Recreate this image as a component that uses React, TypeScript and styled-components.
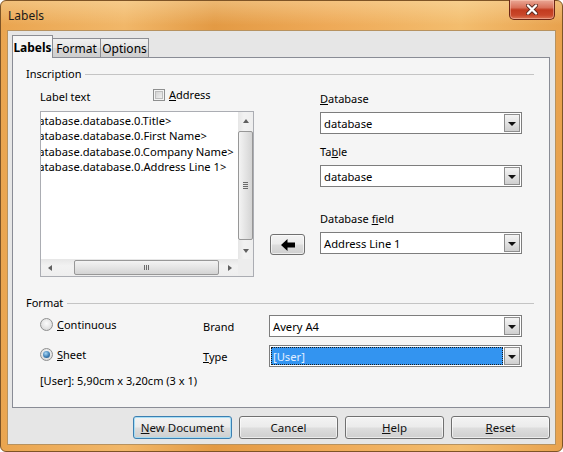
import React from 'react';
import styled, { createGlobalStyle, css } from 'styled-components';

const GlobalStyle = createGlobalStyle`
  html, body {
    margin: 0;
    padding: 0;
  }
  body {
    width: 563px;
    height: 452px;
    overflow: hidden;
    font-family: "Noto Sans", "Open Sans", sans-serif;
    font-size: 11px;
    color: #000;
  }
  * { box-sizing: border-box; }
`;

const Window = styled.div`
  width: 563px;
  height: 452px;
  display: flex;
  flex-direction: column;
  padding: 0 6px 6px 6px;
  border: 1px solid #7e5426;
  border-radius: 6px;
  background:
    linear-gradient(180deg, rgba(255, 240, 200, 0.35) 0px, rgba(255, 255, 255, 0) 24px),
    linear-gradient(90deg, #eaa550 0%, #f1b769 22%, #e39a44 38%, #eea957 58%, #f3bd6e 82%, #e8a24e 100%);
`;

const TitleBar = styled.div`
  height: 29px;
  display: flex;
  align-items: flex-start;
  justify-content: space-between;
  padding-left: 1px;
`;

const Title = styled.div`
  margin-top: 6px;
  font-size: 12px;
  color: #1a1a1a;
`;

const CloseButton = styled.div`
  width: 46px;
  height: 20px;
  margin-right: 1px;
  margin-top: -1px;
  display: flex;
  align-items: center;
  justify-content: center;
  border: 1px solid #6b2616;
  border-top: none;
  border-radius: 0 0 5px 5px;
  background: linear-gradient(180deg, #eaa896 0%, #d9715a 40%, #c23b1f 52%, #c9472a 80%, #dc7656 100%);
  box-shadow: inset 0 0 0 1px rgba(255, 210, 190, 0.45);
`;

const Client = styled.div`
  flex: 1;
  display: flex;
  flex-direction: column;
  background: #e6e6e6;
  border: 1px solid #b7925f;
  padding: 5px 5px 5px 4px;
`;

const TabRow = styled.div`
  height: 21px;
  display: flex;
  align-items: flex-end;
  position: relative;
  z-index: 1;
`;

const Tab = styled.div<{ $active?: boolean; $w: number }>`
  width: ${(p) => p.$w}px;
  display: flex;
  align-items: center;
  justify-content: center;
  border: 1px solid #8c8e94;
  border-bottom: none;
  font-size: 12px;
  ${(p) =>
    p.$active
      ? css`
          height: 23px;
          margin-bottom: -1px;
          background: #f6f6f6;
          font-weight: bold;
          padding-top: 1px;
        `
      : css`
          height: 19px;
          margin-left: -1px;
          background: linear-gradient(180deg, #f0f0f0 0%, #e3e3e3 50%, #d7d7d7 51%, #cfcfcf 100%);
        `}
`;

const Panel = styled.div`
  height: 351px;
  background: #f5f5f5;
  border: 1px solid #898c95;
  padding: 8px 15px 0 13px;
  display: flex;
  flex-direction: column;
`;

const GroupHeading = styled.div<{ $top?: number }>`
  height: 15px;
  margin-top: ${(p) => p.$top ?? 0}px;
  display: flex;
  align-items: center;
  gap: 4px;
  line-height: 15px;

  &::after {
    content: '';
    flex: 1;
    height: 1px;
    background: #c4c4c4;
    margin-top: 1px;
  }
`;

const Inscription = styled.div`
  display: flex;
  padding-left: 14px;
  margin-top: 5px;
`;

const LeftCol = styled.div`
  width: 214px;
  display: flex;
  flex-direction: column;
`;

const LabelRow = styled.div`
  height: 25px;
  display: flex;
  align-items: flex-start;
`;

const LabelText = styled.div`
  width: 113px;
  padding-top: 3px;
  line-height: 15px;
`;

const CheckWrap = styled.label`
  display: flex;
  align-items: center;
  gap: 4px;
  line-height: 15px;
  padding-top: 1px;
`;

const CheckBox = styled.span`
  width: 12px;
  height: 12px;
  border: 1px solid #8e8f8f;
  background: linear-gradient(135deg, #c9c9c9 0%, #e6e6e6 60%, #f6f6f6 100%);
  box-shadow: inset 0 0 0 1px #f4f4f4, inset 0 0 0 2px #bdbdbd;
`;

const TextBox = styled.div`
  height: 166px;
  border: 1px solid #abadb3;
  background: #fff;
  display: grid;
  grid-template-columns: 1fr 15px;
  grid-template-rows: 1fr 17px;
`;

const TextArea = styled.div`
  overflow: hidden;
  line-height: 15.3px;
  font-size: 11.2px;
  padding-top: 1px;
  white-space: nowrap;
`;

const TextLines = styled.div<{ $scroll: number }>`
  margin-left: ${(p) => -p.$scroll}px;
`;

const VScroll = styled.div`
  background: linear-gradient(90deg, #e6e6e6, #f2f2f2 40%, #eeeeee);
  display: flex;
  flex-direction: column;
`;

const HScroll = styled.div`
  background: linear-gradient(180deg, #e6e6e6, #f2f2f2 40%, #eeeeee);
  display: flex;
  align-items: center;
`;

const Corner = styled.div`
  background: #ededed;
`;

const ArrowCell = styled.div<{ $dir: 'up' | 'down' | 'left' | 'right' }>`
  flex: 0 0 17px;
  height: 17px;
  display: flex;
  align-items: center;
  justify-content: center;

  &::before {
    content: '';
    width: 0;
    height: 0;
    ${(p) =>
      p.$dir === 'up'
        ? css`border-left: 3.5px solid transparent; border-right: 3.5px solid transparent; border-bottom: 4px solid #606060;`
        : p.$dir === 'down'
        ? css`border-left: 3.5px solid transparent; border-right: 3.5px solid transparent; border-top: 4px solid #606060;`
        : p.$dir === 'left'
        ? css`border-top: 3.5px solid transparent; border-bottom: 3.5px solid transparent; border-right: 4px solid #606060;`
        : css`border-top: 3.5px solid transparent; border-bottom: 3.5px solid transparent; border-left: 4px solid #606060;`}
  }
`;

const VThumb = styled.div`
  flex: 1;
  margin: 2px 0 2px 0;
  border: 1px solid #979797;
  border-radius: 2px;
  background: linear-gradient(90deg, #f3f3f3 0%, #e4e4e4 50%, #d4d4d4 100%);
  display: flex;
  flex-direction: column;
  align-items: center;
  justify-content: center;
  gap: 1px;

  span {
    width: 5px;
    height: 1px;
    background: #6a6a6a;
  }
`;

const HThumb = styled.div<{ $offset: number }>`
  width: 145px;
  height: 15px;
  margin-left: ${(p) => p.$offset}px;
  border: 1px solid #979797;
  border-radius: 2px;
  background: linear-gradient(180deg, #f3f3f3 0%, #e4e4e4 50%, #d4d4d4 100%);
  display: flex;
  align-items: center;
  justify-content: center;
  gap: 1px;

  span {
    width: 1px;
    height: 5px;
    background: #6a6a6a;
  }
`;

const HSpacer = styled.div`
  flex: 1;
`;

const ArrowCol = styled.div`
  width: 35px;
  margin-left: 16px;
  padding-top: 148px;
`;

const PushButton = styled.div<{ $w?: number; $default?: boolean }>`
  width: ${(p) => p.$w ?? 99}px;
  height: ${(p) => (p.$w ? 21 : 23)}px;
  display: flex;
  align-items: center;
  justify-content: center;
  border: 1px solid ${(p) => (p.$default ? '#3c7fb1' : '#707070')};
  border-radius: 3px;
  background: linear-gradient(180deg, #f3f3f3 0%, #ebebeb 48%, #dddddd 52%, #cfcfcf 100%);
  box-shadow: inset 0 0 0 1px ${(p) => (p.$default ? 'rgba(160, 220, 245, 0.9)' : 'rgba(255, 255, 255, 0.6)')};
  font-size: 11.5px;
  color: #111;
`;

const RightCol = styled.div`
  width: 202px;
  margin-left: 15px;
  display: flex;
  flex-direction: column;
  padding-top: 5px;
`;

const FieldLabel = styled.div<{ $top?: number }>`
  line-height: 15px;
  margin-top: ${(p) => p.$top ?? 0}px;
  margin-bottom: 6px;
`;

const Combo = styled.div`
  height: 22px;
  border: 1px solid #7d7d7d;
  background: #fff;
  display: flex;
  align-items: stretch;
  padding: 1px;
  font-size: 11.2px;
`;

const ComboValue = styled.div<{ $selected?: boolean }>`
  flex: 1;
  display: flex;
  align-items: center;
  padding-left: 2px;
  ${(p) =>
    p.$selected &&
    css`
      background: #3394f0;
      color: #e2efff;
      outline: 1px dotted #1a1a1a;
      outline-offset: -1px;
    `}
`;

const DropButton = styled.div`
  width: 16px;
  border: 1px solid #8d8d8d;
  margin-left: 1px;
  background: linear-gradient(180deg, #f4f4f4 0%, #e2e2e2 50%, #cfcfcf 100%);
  display: flex;
  align-items: center;
  justify-content: center;

  &::before {
    content: '';
    border-left: 4px solid transparent;
    border-right: 4px solid transparent;
    border-top: 4px solid #111;
    margin-top: 1px;
  }
`;

const FormatGrid = styled.div`
  margin-top: 5px;
  padding-left: 14px;
  display: grid;
  grid-template-columns: 163px 66px 253px;
  grid-auto-rows: 22px;
  row-gap: 8px;
  align-items: center;
`;

const RadioWrap = styled.label`
  display: flex;
  align-items: center;
  gap: 4px;
  margin-top: -4px;
  line-height: 15px;
`;

const Radio = styled.span<{ $checked?: boolean }>`
  width: 13px;
  height: 13px;
  border-radius: 50%;
  border: 1px solid #8e8f8f;
  background: radial-gradient(circle at 50% 40%, #fbfbfb 0%, #e4e4e4 55%, #cfcfcf 100%);
  display: flex;
  align-items: center;
  justify-content: center;

  &::after {
    content: '';
    display: ${(p) => (p.$checked ? 'block' : 'none')};
    width: 7px;
    height: 7px;
    border-radius: 50%;
    background: radial-gradient(circle at 40% 35%, #a9d8f6 0%, #3f7fb5 55%, #1d4e7e 100%);
  }
`;

const SideLabel = styled.div`
  line-height: 15px;
  padding-top: 1px;
`;

const InfoText = styled.div`
  margin-top: 6px;
  padding-left: 14px;
  line-height: 15px;
`;

const ButtonRow = styled.div`
  margin-top: 8px;
  display: flex;
  justify-content: flex-end;
  gap: 7px;
`;

const lines = [
  '<database.database.0.Title>',
  '<database.database.0.First Name>',
  '<database.database.0.Company Name>',
  '<database.database.0.Address Line 1>',
];

const CloseIcon = () => (
  <svg width="12" height="11" viewBox="0 0 12 11">
    <path d="M2 1.5 L10 9.5 M10 1.5 L2 9.5" stroke="#5a2a20" strokeWidth="4" strokeLinecap="round" />
    <path d="M2 1.5 L10 9.5 M10 1.5 L2 9.5" stroke="#ffffff" strokeWidth="2.4" strokeLinecap="round" />
  </svg>
);

const LeftArrow = () => (
  <svg width="14" height="12" viewBox="0 0 14 12">
    <path d="M0 6 L6.5 0 L6.5 3.5 L14 3.5 L14 8.5 L6.5 8.5 L6.5 12 Z" fill="#000" />
  </svg>
);

export default function App() {
  return (
    <>
      <GlobalStyle />
      <Window>
        <TitleBar>
          <Title>Labels</Title>
          <CloseButton>
            <CloseIcon />
          </CloseButton>
        </TitleBar>
        <Client>
          <TabRow>
            <Tab $active $w={41}>Labels</Tab>
            <Tab $w={49}>Format</Tab>
            <Tab $w={49}>Options</Tab>
          </TabRow>
          <Panel>
            <GroupHeading>Inscription</GroupHeading>
            <Inscription>
              <LeftCol>
                <LabelRow>
                  <LabelText>Label text</LabelText>
                  <CheckWrap>
                    <CheckBox />
                    <span>
                      <u>A</u>ddress
                    </span>
                  </CheckWrap>
                </LabelRow>
                <TextBox>
                  <TextArea>
                    <TextLines $scroll={16}>
                      {lines.map((l) => (
                        <div key={l}>{l}</div>
                      ))}
                    </TextLines>
                  </TextArea>
                  <VScroll>
                    <ArrowCell $dir="up" />
                    <VThumb>
                      <span />
                      <span />
                      <span />
                      <span />
                    </VThumb>
                    <ArrowCell $dir="down" />
                  </VScroll>
                  <HScroll>
                    <ArrowCell $dir="left" />
                    <HThumb $offset={16}>
                      <span />
                      <span />
                      <span />
                    </HThumb>
                    <HSpacer />
                    <ArrowCell $dir="right" />
                  </HScroll>
                  <Corner />
                </TextBox>
              </LeftCol>
              <ArrowCol>
                <PushButton $w={35}>
                  <LeftArrow />
                </PushButton>
              </ArrowCol>
              <RightCol>
                <FieldLabel>
                  <u>D</u>atabase
                </FieldLabel>
                <Combo>
                  <ComboValue>database</ComboValue>
                  <DropButton />
                </Combo>
                <FieldLabel $top={10}>
                  Ta<u>b</u>le
                </FieldLabel>
                <Combo>
                  <ComboValue>database</ComboValue>
                  <DropButton />
                </Combo>
                <FieldLabel $top={24}>
                  Database <u>f</u>ield
                </FieldLabel>
                <Combo>
                  <ComboValue>Address Line 1</ComboValue>
                  <DropButton />
                </Combo>
              </RightCol>
            </Inscription>

            <GroupHeading $top={18}>Format</GroupHeading>
            <FormatGrid>
              <RadioWrap>
                <Radio />
                <span>
                  <u>C</u>ontinuous
                </span>
              </RadioWrap>
              <SideLabel>Brand</SideLabel>
              <Combo>
                <ComboValue>Avery A4</ComboValue>
                <DropButton />
              </Combo>
              <RadioWrap>
                <Radio $checked />
                <span>
                  <u>S</u>heet
                </span>
              </RadioWrap>
              <SideLabel>
                <u>T</u>ype
              </SideLabel>
              <Combo>
                <ComboValue $selected>[User]</ComboValue>
                <DropButton />
              </Combo>
            </FormatGrid>
            <InfoText>[User]: 5,90cm x 3,20cm (3 x 1)</InfoText>
          </Panel>
          <ButtonRow>
            <PushButton $default>
              <span>
                <u>N</u>ew Document
              </span>
            </PushButton>
            <PushButton>Cancel</PushButton>
            <PushButton>
              <span>
                <u>H</u>elp
              </span>
            </PushButton>
            <PushButton>
              <span>
                <u>R</u>eset
              </span>
            </PushButton>
          </ButtonRow>
        </Client>
      </Window>
    </>
  );
}
